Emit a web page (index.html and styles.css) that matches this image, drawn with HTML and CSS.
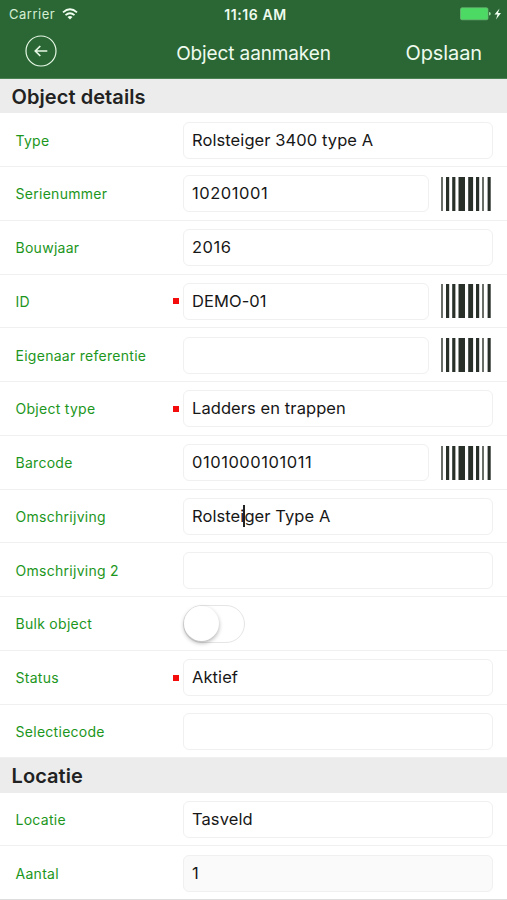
FILE: index.html
```
<!DOCTYPE html>
<html lang="nl">
<head>
<meta charset="utf-8">
<title>Object aanmaken</title>
<link rel="stylesheet" href="styles.css">
</head>
<body>
<svg class="defs" width="0" height="0" aria-hidden="true">
  <symbol id="barcode" viewBox="0 0 50 34">
    <g fill="#29302a">
      <path d="M0 0h2v34H0zM41 0h2v34h-2z" opacity=".7"/>
      <path d="M5 0h3.2v34H5zM11.2 0h3.2v34h-3.2zM17.5 0h6.5v34h-6.5zM27.2 0h4.9v34h-4.9zM35 0h3.2v34H35zM46.6 0h3.1v34h-3.1z"/>
    </g>
  </symbol>
</svg>
<header class="top">
  <div class="status">
    <div class="carrier"><span>Carrier</span>
      <svg width="16" height="12" viewBox="0 0 16 12"><g fill="none" stroke="#f0fff0" stroke-width="1.8"><path d="M1 4.4Q8-1.9 15 4.4"/><path d="M3.5 7.2Q8 3.2 12.5 7.2"/></g><path d="M5.5 9Q8 7 10.5 9L8 11.6z" fill="#f0fff0"/></svg>
    </div>
    <div class="clock">11:16 AM</div>
    <div class="power">
      <svg width="42" height="14" viewBox="0 0 42 14"><rect x=".5" y=".8" width="27.5" height="12" rx="1.5" fill="#4cd964" stroke="#71b878" stroke-width=".7"/><path d="M29 5q1.8 0 1.8 1.8T29 8.600z" fill="#9be0a0"/><path d="M39.500 1.500L34.500 7.600H37.500L36 12.500L41 6H38z" fill="#f0fff0"/></svg>
    </div>
  </div>
  <nav class="nav">
    <svg class="back" width="32" height="32" viewBox="0 0 32 32" fill="none" stroke="#e6f8e4"><circle cx="16" cy="16" r="15" stroke-width="1.200"/><path d="M22.300 16H10.800M15.300 11L10.300 16L15.300 21" stroke-width="1.700"/></svg>
    <h1 class="title">Object aanmaken</h1>
    <span class="save">Opslaan</span>
  </nav>
</header>
<main>
  <h2 class="section">Object details</h2>
  <div class="row"><label>Type</label><div class="field">Rolsteiger 3400 type A</div></div>
  <div class="row"><label>Serienummer</label><div class="field num">10201001</div><svg class="scan"><use href="#barcode"/></svg></div>
  <div class="row"><label>Bouwjaar</label><div class="field num">2016</div></div>
  <div class="row"><label class="required">ID</label><div class="field">DEMO-01</div><svg class="scan"><use href="#barcode"/></svg></div>
  <div class="row"><label>Eigenaar referentie</label><div class="field"></div><svg class="scan"><use href="#barcode"/></svg></div>
  <div class="row"><label class="required">Object type</label><div class="field">Ladders en trappen</div></div>
  <div class="row"><label>Barcode</label><div class="field num">0101000101011</div><svg class="scan"><use href="#barcode"/></svg></div>
  <div class="row"><label>Omschrijving</label><div class="field">Rolstei<i class="caret"></i>ger Type A</div></div>
  <div class="row"><label>Omschrijving 2</label><div class="field"></div></div>
  <div class="row"><label>Bulk object</label><div class="switch"><span class="knob"></span></div></div>
  <div class="row"><label class="required">Status</label><div class="field">Aktief</div></div>
  <div class="row"><label>Selectiecode</label><div class="field"></div></div>
  <h2 class="section">Locatie</h2>
  <div class="row"><label>Locatie</label><div class="field">Tasveld</div></div>
  <div class="row last"><label>Aantal</label><div class="field disabled">1</div></div>
</main>
</body>
</html>
```
FILE: styles.css
```
* { box-sizing: border-box; }
body {
  margin: 0;
  height: 900px;
  overflow: hidden;
  background: #fff;
  color: #171717;
  font-family: Inter, "Liberation Sans", sans-serif;
}
.defs { position: absolute; }
.top {
  height: 79px;
  background: #2a6735;
  border-bottom: 1px solid #4b8253;
  color: #effbee;
}
.status, .nav {
  display: grid;
  grid-template-columns: 1fr auto 1fr;
  align-items: center;
}
.status { height: 28px; padding: 0 5px 0 9px; font-size: 13px; }
.carrier { display: flex; align-items: center; gap: 6.5px; letter-spacing: .5px; color: #d5efd3; }
.clock { font-size: 14px; font-weight: 600; letter-spacing: .6px; }
.power { display: flex; justify-content: flex-end; }
.nav { height: 50px; padding: 0 25px 0 25px; }
.back { margin-top: -4px; }
.title { margin: 0; font-size: 19px; font-weight: 400; letter-spacing: -.12px; }
.save { justify-self: end; font-size: 20px; letter-spacing: -.1px; }
.section {
  height: 34.3px;
  margin: 0;
  padding-left: 11.5px;
  background: #ececec;
  color: #222;
  font-size: 20px;
  font-weight: 600;
  letter-spacing: .07px;
  line-height: 36px;
}
.row {
  display: flex;
  align-items: center;
  height: 53.75px;
  padding: 1px 14.5px 0 15.5px;
  border-bottom: 1.500px solid #f0f0f0;
}
.row.last { border-color: #ddd; }
label {
  display: flex;
  align-items: center;
  justify-content: space-between;
  width: 167.5px;
  padding-right: 4px;
  color: #1c961c;
  font-size: 14px;
  letter-spacing: .28px;
}
.required::after { content: ""; width: 6px; height: 6px; background: #f40b0b; }
.field {
  flex: 1;
  height: 37px;
  padding-left: 8px;
  border: 1.500px solid #f0f0f0;
  border-radius: 6px;
  font-size: 16.500px;
  letter-spacing: .08px;
  line-height: 34px;
  white-space: nowrap;
}
.num { letter-spacing: .54px; }
.disabled { background: #fafafa; }
.scan { width: 50px; height: 34px; margin: 0 2px 0 11.5px; }
.caret {
  display: inline-block;
  width: 2px;
  height: 22px;
  margin: 0 -1px;
  background: #222;
  vertical-align: -5px;
}
.switch {
  width: 62px;
  height: 38px;
  border: 1.500px solid #e5e5e5;
  border-radius: 19px;
}
.knob {
  display: block;
  width: 35px;
  height: 35px;
  border-radius: 50%;
  background: #fff;
  box-shadow: 0 2px 4px rgba(0, 0, 0, .3);
}
```
